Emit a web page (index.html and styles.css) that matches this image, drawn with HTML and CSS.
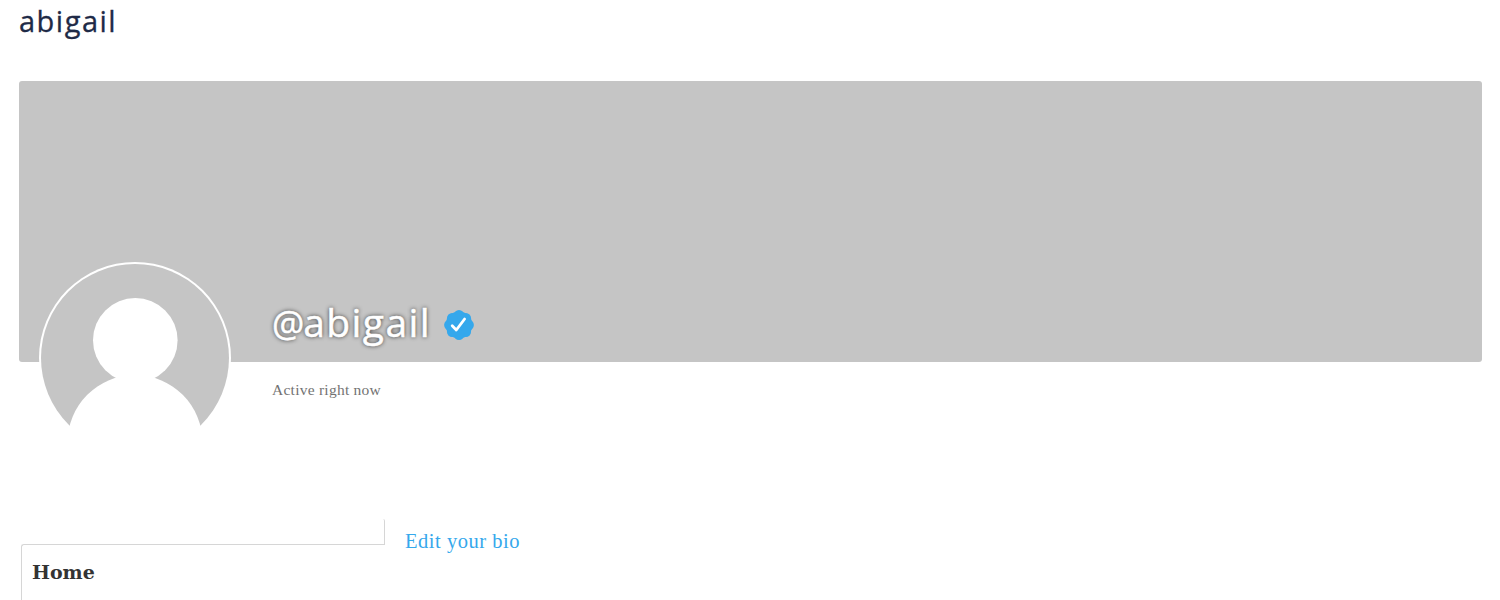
FILE: index.html
```html
<!DOCTYPE html>
<html lang="en">
<head>
<meta charset="utf-8">
<title>abigail</title>
<link rel="stylesheet" href="styles.css">
</head>
<body>
<main class="page">
  <h1 class="page-title">abigail</h1>
  <header class="profile">
    <div class="cover"></div>
    <div class="identity">
      <svg class="avatar" viewBox="0 0 192 192" role="img" aria-label="Avatar">
        <defs><clipPath id="disc"><circle cx="96" cy="96" r="94"/></clipPath></defs>
        <circle cx="96" cy="96" r="96" fill="#fff"/>
        <g clip-path="url(#disc)">
          <rect width="192" height="164" fill="#c5c5c5"/>
          <rect y="164" width="192" height="28" fill="#fff"/>
          <circle cx="96.3" cy="78.3" r="42.3" fill="#fff"/>
          <circle cx="96" cy="180.5" r="67.5" fill="#fff"/>
        </g>
      </svg>
      <div class="details">
        <h2 class="handle"><span class="handle-text"><span class="at">@</span>abigail</span>
          <svg class="verified" viewBox="0 0 30 30" role="img" aria-label="Verified">
            <g fill="#35a8ec">
              <circle cx="15" cy="15" r="13.4"/>
              <circle cx="15" cy="5.3" r="5.2"/><circle cx="21.86" cy="8.14" r="5.2"/>
              <circle cx="24.7" cy="15" r="5.2"/><circle cx="21.86" cy="21.86" r="5.2"/>
              <circle cx="15" cy="24.7" r="5.2"/><circle cx="8.14" cy="21.86" r="5.2"/>
              <circle cx="5.3" cy="15" r="5.2"/><circle cx="8.14" cy="8.14" r="5.2"/>
            </g>
            <path d="M8.2 15.8 12.3 20 20.6 9" fill="none" stroke="#fff" stroke-width="2.8" stroke-linecap="round" stroke-linejoin="round"/>
          </svg>
        </h2>
        <p class="activity">Active right now</p>
      </div>
    </div>
  </header>
  <div class="content">
    <nav class="side">
      <div class="side-edge"></div>
      <div class="side-menu"><a class="side-link">Home</a></div>
    </nav>
    <a class="edit-bio">Edit your bio</a>
  </div>
</main>
</body>
</html>
```
FILE: styles.css
```css
* { box-sizing: border-box; }
body { margin: 0; background: #fff; overflow: hidden; font-family: Georgia, "Liberation Serif", serif; }
.page { height: 600px; padding: 0 18px 0 19px; overflow: hidden; }
.page-title { margin: 0; height: 81px; font: 500 29px/42px "Open Sans", sans-serif; letter-spacing: 1.5px; color: #1e2a47; -webkit-text-stroke: .3px #1e2a47; }
.profile { height: 438px; }
.cover { height: 281px; border-radius: 3px; background: #c5c5c5; }
.identity { display: flex; gap: 41px; margin: -100px 0 0 20px; position: relative; }
.avatar { width: 192px; height: 192px; flex: none; }
.details { padding-top: 36px; }
.handle { display: flex; align-items: center; gap: 13px; height: 54px; margin: 0; font: 500 39px/48px "Open Sans", sans-serif; letter-spacing: 1.4px; color: #fff; text-shadow: 0 0 4px rgba(0, 0, 0, .8); }
.handle-text { width: 159px; height: 54px; white-space: nowrap; -webkit-text-stroke: .5px #fff; }
.at { font-size: 36px; letter-spacing: -1px; }
.verified { width: 30px; height: 30px; flex: none; }
.activity { margin: 27px 0 0; font-size: 15.5px; line-height: 22px; letter-spacing: .25px; color: #737373; }
.content { display: flex; gap: 20px; padding-left: 2px; }
.side { width: 364px; flex: none; }
.side-edge { height: 25px; border-right: 1px solid #d6d6d6; border-top-right-radius: 2px; }
.side-menu { height: 60px; padding: 14px 10px; border: solid #d6d6d6; border-width: 1px 0 0 1px; border-top-left-radius: 3px; }
.side-link { display: block; font: 700 19px/26px "DejaVu Serif", serif; color: #333; }
.edit-bio { margin-top: 9px; font-size: 20.5px; line-height: 26px; letter-spacing: .53px; color: #35a8ec; }
```
